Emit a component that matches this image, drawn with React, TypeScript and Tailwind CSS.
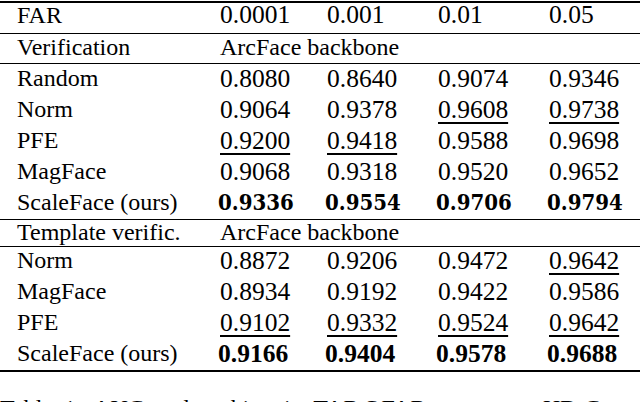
const serif = "font-['Liberation_Serif','Times_New_Roman',serif]";

type Cell = { v: string; u?: boolean; b?: boolean };

const verification: { name: string; cells: Cell[] }[] = [
  { name: "Random", cells: [{ v: "0.8080" }, { v: "0.8640" }, { v: "0.9074" }, { v: "0.9346" }] },
  { name: "Norm", cells: [{ v: "0.9064" }, { v: "0.9378" }, { v: "0.9608", u: true }, { v: "0.9738", u: true }] },
  { name: "PFE", cells: [{ v: "0.9200", u: true }, { v: "0.9418", u: true }, { v: "0.9588" }, { v: "0.9698" }] },
  { name: "MagFace", cells: [{ v: "0.9068" }, { v: "0.9318" }, { v: "0.9520" }, { v: "0.9652" }] },
  { name: "ScaleFace (ours)", cells: [{ v: "0.9336", b: true }, { v: "0.9554", b: true }, { v: "0.9706", b: true }, { v: "0.9794", b: true }] },
];

const template: { name: string; cells: Cell[] }[] = [
  { name: "Norm", cells: [{ v: "0.8872" }, { v: "0.9206" }, { v: "0.9472" }, { v: "0.9642", u: true }] },
  { name: "MagFace", cells: [{ v: "0.8934" }, { v: "0.9192" }, { v: "0.9422" }, { v: "0.9586" }] },
  { name: "PFE", cells: [{ v: "0.9102", u: true }, { v: "0.9332", u: true }, { v: "0.9524", u: true }, { v: "0.9642", u: true }] },
  { name: "ScaleFace (ours)", cells: [{ v: "0.9166", b: true }, { v: "0.9404", b: true }, { v: "0.9578", b: true }, { v: "0.9688", b: true }] },
];

const cols = "grid grid-cols-[203px_107px_111px_111px_1fr] items-center pl-[17px]";

function Value({ cell, mathBold }: { cell: Cell; mathBold?: boolean }) {
  if (cell.b && mathBold) {
    // computer-modern style bold digits
    return (
      <span className="-ml-[2px] font-['DejaVu_Serif_Condensed','DejaVu_Serif',serif] font-bold text-[22px]">
        {cell.v}
      </span>
    );
  }
  return (
    <span
      className={
        "text-[25.5px] " +
        (cell.b ? "font-bold -ml-[2px] " : "") +
        (cell.u ? "underline decoration-[1.5px] underline-offset-[4px]" : "")
      }
    >
      {cell.v}
    </span>
  );
}

function Row({ name, cells, mathBold, h }: { name: string; cells: Cell[]; mathBold?: boolean; h: string }) {
  return (
    <div className={`${cols} ${h}`}>
      <span>{name}</span>
      {cells.map((c, i) => (
        <Value key={i} cell={c} mathBold={mathBold} />
      ))}
    </div>
  );
}

export default function App() {
  return (
    <div className={`w-[640px] h-[402px] overflow-hidden bg-white text-black text-[24px] ${serif}`}>
      <div className="mt-[1px] border-t-2 border-black">
        <div className={`${cols} h-[30px] leading-[24px] items-start`}>
          <span>FAR</span>
          <span className="text-[25.5px]">0.0001</span>
          <span className="text-[25.5px]">0.001</span>
          <span className="text-[25.5px]">0.01</span>
          <span className="text-[25.5px]">0.05</span>
        </div>
        <div className={`${cols} h-[30px] leading-[26px] items-start border-t border-black`}>
          <span>Verification</span>
          <span className="col-span-4">ArcFace backbone</span>
        </div>
        <div className="border-t border-black">
          {verification.map((r) => (
            <div key={r.name} className="h-[31px]">
              <Row name={r.name} cells={r.cells} mathBold h="h-[29px] leading-[29px]" />
            </div>
          ))}
        </div>
        <div className={`${cols} h-[27px] leading-[24px] items-start border-t border-black`}>
          <span>Template verific.</span>
          <span className="col-span-4">ArcFace backbone</span>
        </div>
        <div className="border-t border-black">
          {template.map((r) => (
            <div key={r.name} className="h-[31px]">
              <Row name={r.name} cells={r.cells} h="h-[27px] leading-[27px]" />
            </div>
          ))}
        </div>
      </div>
      <div className="-mt-[1px] border-t-2 border-black" />
      <div className="mt-[24px] flex justify-between leading-[24px] whitespace-nowrap pr-[40px]">
        <span>Table</span>
        <span>1:</span>
        <span>AUC</span>
        <span>and</span>
        <span>ranking</span>
        <span>in</span>
        <span>TAR@FAR</span>
        <span>scores</span>
        <span>on</span>
        <span>IJB-C</span>
      </div>
    </div>
  );
}
